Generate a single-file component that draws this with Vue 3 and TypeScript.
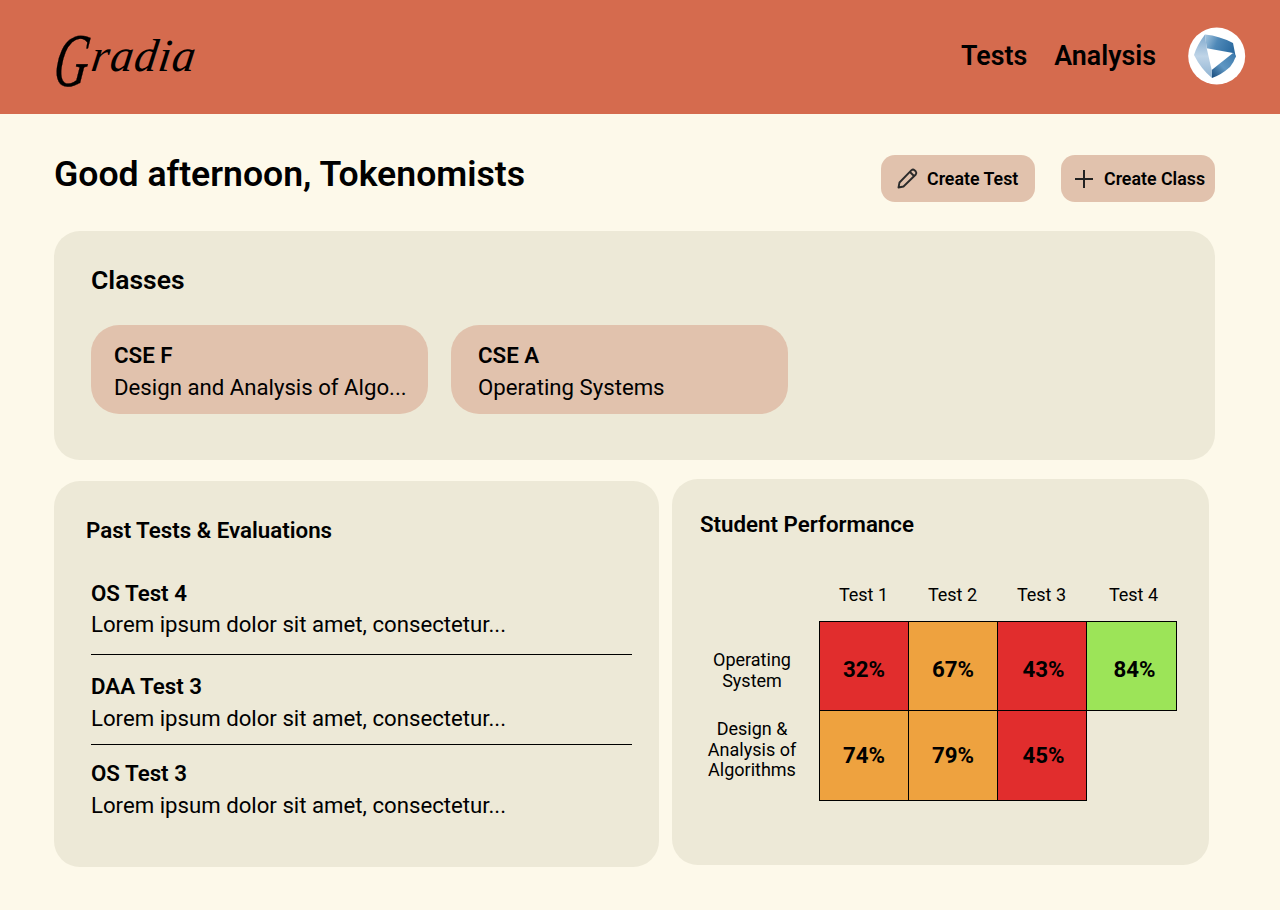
<script setup lang="ts">
interface PastTest {
  name: string
  desc: string
}

interface Row {
  label: string[]
  scores: number[]
}

const classes = [
  { code: 'CSE F', subject: 'Design and Analysis of Algo...' },
  { code: 'CSE A', subject: 'Operating Systems' },
]

const pastTests: PastTest[] = [
  { name: 'OS Test 4', desc: 'Lorem ipsum dolor sit amet, consectetur...' },
  { name: 'DAA Test 3', desc: 'Lorem ipsum dolor sit amet, consectetur...' },
  { name: 'OS Test 3', desc: 'Lorem ipsum dolor sit amet, consectetur...' },
]

const testNames = ['Test 1', 'Test 2', 'Test 3', 'Test 4']

const rows: Row[] = [
  { label: ['Operating', 'System'], scores: [32, 67, 43, 84] },
  { label: ['Design &', 'Analysis of', 'Algorithms'], scores: [74, 79, 45] },
]

// score bands used by the heat map
function band(score: number): string {
  if (score < 50) return 'low'
  if (score < 80) return 'mid'
  return 'high'
}
</script>

<template>
  <div class="page">
    <header class="topbar">
      <div class="brand"><span class="cap">G</span>radia</div>
      <nav class="nav">
        <a>Tests</a>
        <a>Analysis</a>
        <svg class="avatar" width="58" height="58" viewBox="0 0 58 58">
          <defs>
            <linearGradient id="bandA" x1="0" y1="0" x2="1" y2="0.35">
              <stop offset="0" stop-color="#a9c8e0" />
              <stop offset="0.45" stop-color="#4f89b8" />
              <stop offset="1" stop-color="#2c6ba0" />
            </linearGradient>
            <linearGradient id="bandB" x1="0" y1="1" x2="1" y2="0">
              <stop offset="0" stop-color="#16497a" />
              <stop offset="0.45" stop-color="#5f97c3" />
              <stop offset="1" stop-color="#3a78ab" />
            </linearGradient>
            <linearGradient id="bandC" x1="0.5" y1="0" x2="0.5" y2="1">
              <stop offset="0" stop-color="#7fa9cd" />
              <stop offset="0.5" stop-color="#bfd4e7" />
              <stop offset="1" stop-color="#8fb3d2" />
            </linearGradient>
          </defs>
          <circle cx="28.7" cy="29" r="28.5" fill="#fff" />
          <path d="M17 7.5 Q32 9 45 16 L48 31 L45 26 L18.7 21.3 Z" fill="url(#bandA)" />
          <path d="M48 29 Q46 35 42 40 Q33 48 24 51 L23.7 43 L45 26 Z" fill="url(#bandB)" />
          <path d="M17 7.5 Q9 18 6 28 Q13 42 24 51 L23.7 43 L18.7 21.3 Z" fill="url(#bandC)" />
        </svg>
      </nav>
    </header>

    <main class="content">
      <div class="greeting">
        <h1>Good afternoon, Tokenomists</h1>
        <div class="actions">
          <button class="action test">
            <svg width="24" height="24" viewBox="0 0 24 24" fill="none" stroke="#2b2b2b" stroke-width="1.9" stroke-linejoin="round">
              <path d="M3.5 20.5 L4.5 15.5 L16.5 3.2 Q18 2 19.5 3.2 L20.8 4.5 Q22 6 20.8 7.5 L8.5 19.5 Z" />
              <path d="M15 5 L19 9" />
            </svg>
            Create Test
          </button>
          <button class="action add">
            <svg width="24" height="24" viewBox="0 0 24 24" fill="none" stroke="#222" stroke-width="2">
              <path d="M12 3 V21 M3 12 H21" />
            </svg>
            Create Class
          </button>
        </div>
      </div>

      <section class="panel classes">
        <h2>Classes</h2>
        <div class="class-list">
          <div v-for="c in classes" :key="c.code" class="class-card">
            <strong>{{ c.code }}</strong>
            <span>{{ c.subject }}</span>
          </div>
        </div>
      </section>

      <div class="bottom">
        <section class="panel past">
          <h3>Past Tests &amp; Evaluations</h3>
          <div v-for="t in pastTests" :key="t.name" class="test-row">
            <strong>{{ t.name }}</strong>
            <span>{{ t.desc }}</span>
          </div>
        </section>

        <section class="panel perf">
          <h3>Student Performance</h3>
          <div class="heat">
            <div></div>
            <div v-for="name in testNames" :key="name" class="col-head">{{ name }}</div>
            <template v-for="(row, r) in rows" :key="row.label[0]">
              <div class="row-head" :class="'row-' + r">
                <span v-for="line in row.label" :key="line">{{ line }}</span>
              </div>
              <div v-for="(s, i) in row.scores" :key="i" class="cell" :class="[band(s), 'row-' + r, 'col-' + i]">{{ s }}%</div>
              <div v-if="row.scores.length < 4"></div>
            </template>
          </div>
        </section>
      </div>
    </main>
  </div>
</template>

<style>
html,
body {
  margin: 0;
  background: #fdf9ea;
}
</style>

<style scoped>
.page {
  height: 910px;
  background: #fdf9ea;
  font-family: Roboto, "Liberation Sans", sans-serif;
  color: #000;
  overflow: hidden;
}

.topbar {
  height: 114px;
  background: #d56b4e;
  display: flex;
  align-items: center;
  justify-content: space-between;
  padding: 0 34px 2px 56px;
  box-sizing: border-box;
}

.brand {
  font-family: "Liberation Serif", serif;
  font-style: italic;
  font-size: 46px;
  letter-spacing: 1px;
  line-height: 1;
  color: #000;
  transform: skewX(-8deg);
}

.cap {
  display: inline-block;
  font-size: 76px;
  line-height: 40px;
  vertical-align: -15px;
  transform: scaleX(0.62);
  transform-origin: left center;
  margin-right: -20px;
  -webkit-text-stroke: 0.4px #000;
}

.nav {
  display: flex;
  align-items: center;
  font-size: 26.8px;
  font-weight: 600;
}

.nav a {
  margin-right: 27px;
}

.nav a:nth-child(2) {
  margin-right: 32px;
}

.avatar {
  display: block;
}

.content {
  padding: 0 65px 0 54px;
}

.greeting {
  display: flex;
  justify-content: space-between;
  padding-top: 41px;
  height: 76px;
}

h1 {
  margin: 0;
  font-size: 35.6px;
  font-weight: 600;
  line-height: 38px;
}

.actions {
  display: flex;
  gap: 26px;
}

.action {
  width: 154px;
  height: 47px;
  border: none;
  border-radius: 14px;
  background: #e1c2ad;
  color: #000;
  font-family: inherit;
  font-size: 17.8px;
  font-weight: 600;
  display: flex;
  align-items: center;
  gap: 8px;
  padding: 0;
}

.action.test {
  padding-left: 14px;
}

.action.add {
  padding-left: 11px;
}

.panel {
  background: #ede9d7;
  border-radius: 26px;
  box-sizing: border-box;
}

.classes {
  height: 229px;
  padding: 33px 37px;
}

h2 {
  margin: 0;
  font-size: 26.5px;
  font-weight: 600;
  line-height: 32px;
}

.class-list {
  display: flex;
  gap: 23px;
  margin-top: 29px;
}

.class-card {
  width: 337px;
  height: 89px;
  box-sizing: border-box;
  padding: 15px 20px 0 23px;
  background: #e1c2ad;
  border-radius: 28px;
  display: flex;
  flex-direction: column;
}

.class-card + .class-card {
  padding-left: 27px;
}

.class-card strong {
  line-height: 31px;
}

.class-card strong,
.test-row strong {
  font-size: 22.3px;
  font-weight: 600;
}

.test-row strong {
  line-height: 30px;
}

.class-card span,
.test-row span {
  font-size: 22.2px;
  line-height: 32px;
  white-space: nowrap;
}

.bottom {
  display: flex;
  align-items: flex-start;
}

.past {
  width: 605px;
  height: 386px;
  margin-top: 21px;
  padding: 34px 27px 0 32px;
}

.perf {
  width: 537px;
  height: 386px;
  margin-top: 19px;
  margin-left: 13px;
  padding: 30px 28px 0 28px;
}

h3 {
  margin: 0;
  font-size: 22.3px;
  font-weight: 600;
  line-height: 30px;
}

.test-row {
  display: flex;
  flex-direction: column;
  margin-left: 5px;
  padding: 0 0 14px;
  border-bottom: 1px solid #000;
  margin-top: 33px;
}

.test-row + .test-row {
  margin-top: 0;
  padding: 16px 0 10px;
}

.test-row + .test-row span {
  margin-top: 1px;
}

.test-row:last-child {
  padding-top: 13px;
  border-bottom: none;
}

.heat {
  display: grid;
  grid-template-columns: 119px 89px 89px 89px 90px;
  grid-template-rows: 41px 89px 90px;
  margin-top: 41px;
  align-items: stretch;
}

.col-head {
  font-size: 18px;
  text-align: center;
  line-height: 30px;
}

.col-head:nth-child(5) {
  padding-left: 5px;
}

.row-head {
  display: flex;
  flex-direction: column;
  justify-content: center;
  text-align: center;
  font-size: 18px;
  line-height: 20.5px;
  padding-right: 15px;
}

.row-head.row-0 {
  padding-top: 10px;
}

.row-head.row-1 {
  padding-bottom: 10px;
}

.cell {
  display: flex;
  align-items: center;
  justify-content: center;
  font-size: 22.3px;
  font-weight: 700;
  border: 1px solid #000;
  margin: 0 -1px -1px 0;
}

.cell.row-0 {
  padding-top: 5px;
}

.cell.row-1 {
  padding-bottom: 2px;
}

.cell.col-2 {
  padding-left: 3px;
}

.cell.col-3 {
  padding-left: 6px;
}

.low {
  background: #e12d2d;
}

.mid {
  background: #eea23f;
}

.high {
  background: #9ce458;
}
</style>
